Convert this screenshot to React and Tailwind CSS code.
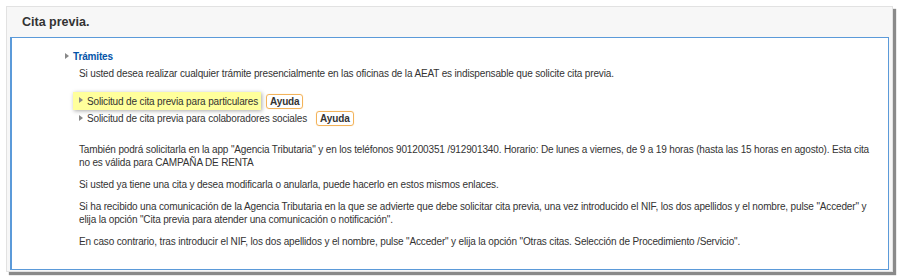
import { useState } from 'react'

const Arrow = () => (
	<span className="inline-block w-0 h-0 border-y-[3.5px] border-y-transparent border-l-[4px] border-l-[#888] mr-[4px] align-middle relative -top-[1px]" />
)

const Ayuda = () => (
	<span className="inline-block ml-[5px] px-[3px] leading-[13px] border border-[#f3b35a] rounded-[3px] font-bold text-[#333] shadow-[0_0_1px_#f8d49c]">
		Ayuda
	</span>
)

export default function App() {
	const [hover] = useState(0)

	return (
		<div className="w-[900px] h-[280px] bg-white pt-[6px] pl-[6px] font-['Liberation_Sans',Arial,sans-serif] text-[10px] tracking-[-0.15px] text-[#333]">
			<div className="w-[887px] h-[266px] bg-[#f7f7f7] border border-[#e2e2e2] shadow-[3px_3px_1px_#8a8a8a] flex flex-col">
				<div className="h-[30px] flex items-center pl-[15px]">
					<h1 className="text-[12.5px] tracking-normal font-bold text-[#333] leading-none">Cita previa.</h1>
				</div>
				<div className="mx-[3px] flex-1 mb-[1px] bg-white border border-[#5b9ad9] border-l-2 pl-[67px] pr-[8px] pt-[12px] leading-[13px]">
					<div className="-ml-[14px] flex items-center font-bold text-[#0454a8]">
						<Arrow />
						<span>Trámites</span>
					</div>
					<p className="mt-[4px]">
						Si usted desea realizar cualquier trámite presencialmente en las oficinas de la AEAT es indispensable que solicite cita previa.
					</p>
					<ul className="mt-[12px] -ml-[6px]">
						<li className="flex items-center">
							<span
								className={
									hover === 0
										? 'inline-flex items-center h-[18px] pl-[6px] pr-[3px] bg-[#ffff9c] shadow-[1px_1px_4px_#aaa]'
										: 'inline-flex items-center h-[18px] pl-[6px] pr-[3px]'
								}
							>
								<Arrow />
								Solicitud de cita previa para particulares
							</span>
							<Ayuda />
						</li>
						<li className="flex items-center mt-[1px] pl-[6px]">
							<Arrow />
							Solicitud de cita previa para colaboradores sociales
							<span className="ml-[4px]">
								<Ayuda />
							</span>
						</li>
					</ul>
					<p className="mt-[17px]">
						También podrá solicitarla en la app "Agencia Tributaria" y en los teléfonos 901200351 /912901340. Horario: De lunes a viernes, de 9 a 19 horas (hasta las 15 horas en agosto). Esta cita no es válida para CAMPAÑA DE RENTA
					</p>
					<p className="mt-[9px]">
						Si usted ya tiene una cita y desea modificarla o anularla, puede hacerlo en estos mismos enlaces.
					</p>
					<p className="mt-[9px]">
						Si ha recibido una comunicación de la Agencia Tributaria en la que se advierte que debe solicitar cita previa, una vez introducido el NIF, los dos apellidos y el nombre, pulse "Acceder" y elija la opción "Cita previa para atender una comunicación o notificación".
					</p>
					<p className="mt-[9px]">
						En caso contrario, tras introducir el NIF, los dos apellidos y el nombre, pulse "Acceder" y elija la opción "Otras citas. Selección de Procedimiento /Servicio".
					</p>
				</div>
			</div>
		</div>
	)
}
